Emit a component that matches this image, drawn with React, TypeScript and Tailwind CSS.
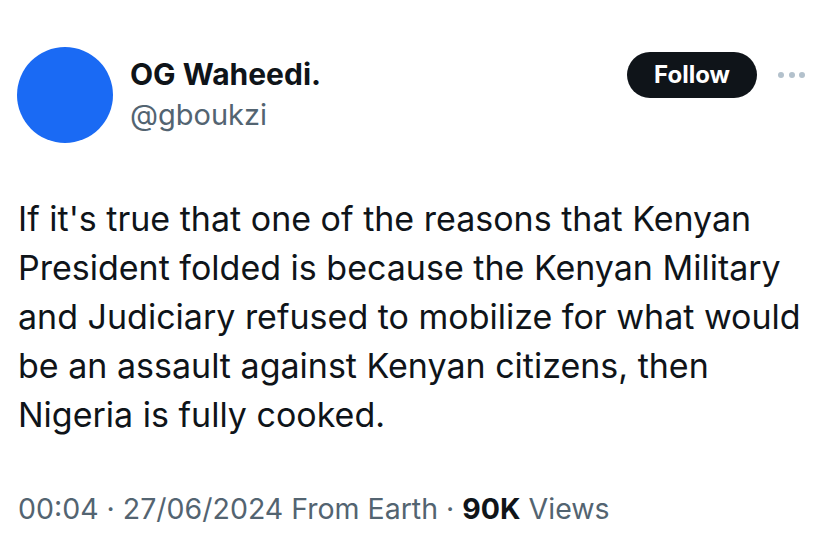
const tweet = {
  name: 'OG Waheedi.',
  handle: '@gboukzi',
  text: "If it's true that one of the reasons that Kenyan President folded is because the Kenyan Military and Judiciary refused to mobilize for what would be an assault against Kenyan citizens, then Nigeria is fully cooked.",
  time: '00:04',
  date: '27/06/2024',
  source: 'From Earth',
  views: '90K',
};

export default function App() {
  return (
    <div
      className="w-[828px] h-[549px] bg-white overflow-hidden"
      style={{ fontFamily: 'Inter, "Noto Sans", sans-serif' }}
    >
      {/* Header */}
      <div className="flex items-start justify-between pt-[47px] pl-[17px] pr-[23px]">
        <div className="flex items-start">
          <div className="w-24 h-24 rounded-full bg-[#1a6af4] shrink-0" />
          <div className="ml-[17px] mt-[10px]">
            <div className="text-[30px] leading-[34px] font-bold text-[#0f1419]">{tweet.name}</div>
            <div className="text-[29px] leading-[34px] mt-[7px] text-[#536471]">{tweet.handle}</div>
          </div>
        </div>
        <div className="flex items-center mt-[5px]">
          <button className="h-[46px] w-[130px] rounded-full bg-[#0f1419] text-white text-[24px] font-bold">
            Follow
          </button>
          {/* more */}
          <div className="ml-[21px] flex items-center gap-[4.5px]">
            <span className="w-[6px] h-[6px] rounded-full bg-[#b3c1cc]" />
            <span className="w-[6px] h-[6px] rounded-full bg-[#b3c1cc]" />
            <span className="w-[6px] h-[6px] rounded-full bg-[#b3c1cc]" />
          </div>
        </div>
      </div>

      {/* Body */}
      <p className="mt-[51px] pl-[18px] pr-[20px] text-[34px] leading-[49px] text-[#0f1419]">
        {tweet.text}
      </p>

      {/* Meta */}
      <div className="mt-[53px] pl-[18px] text-[28.5px] leading-[34px] text-[#536471]">
        {tweet.time} · {tweet.date} {tweet.source} ·{' '}
        <span className="font-bold text-[#0f1419]">{tweet.views}</span> Views
      </div>
    </div>
  );
}
